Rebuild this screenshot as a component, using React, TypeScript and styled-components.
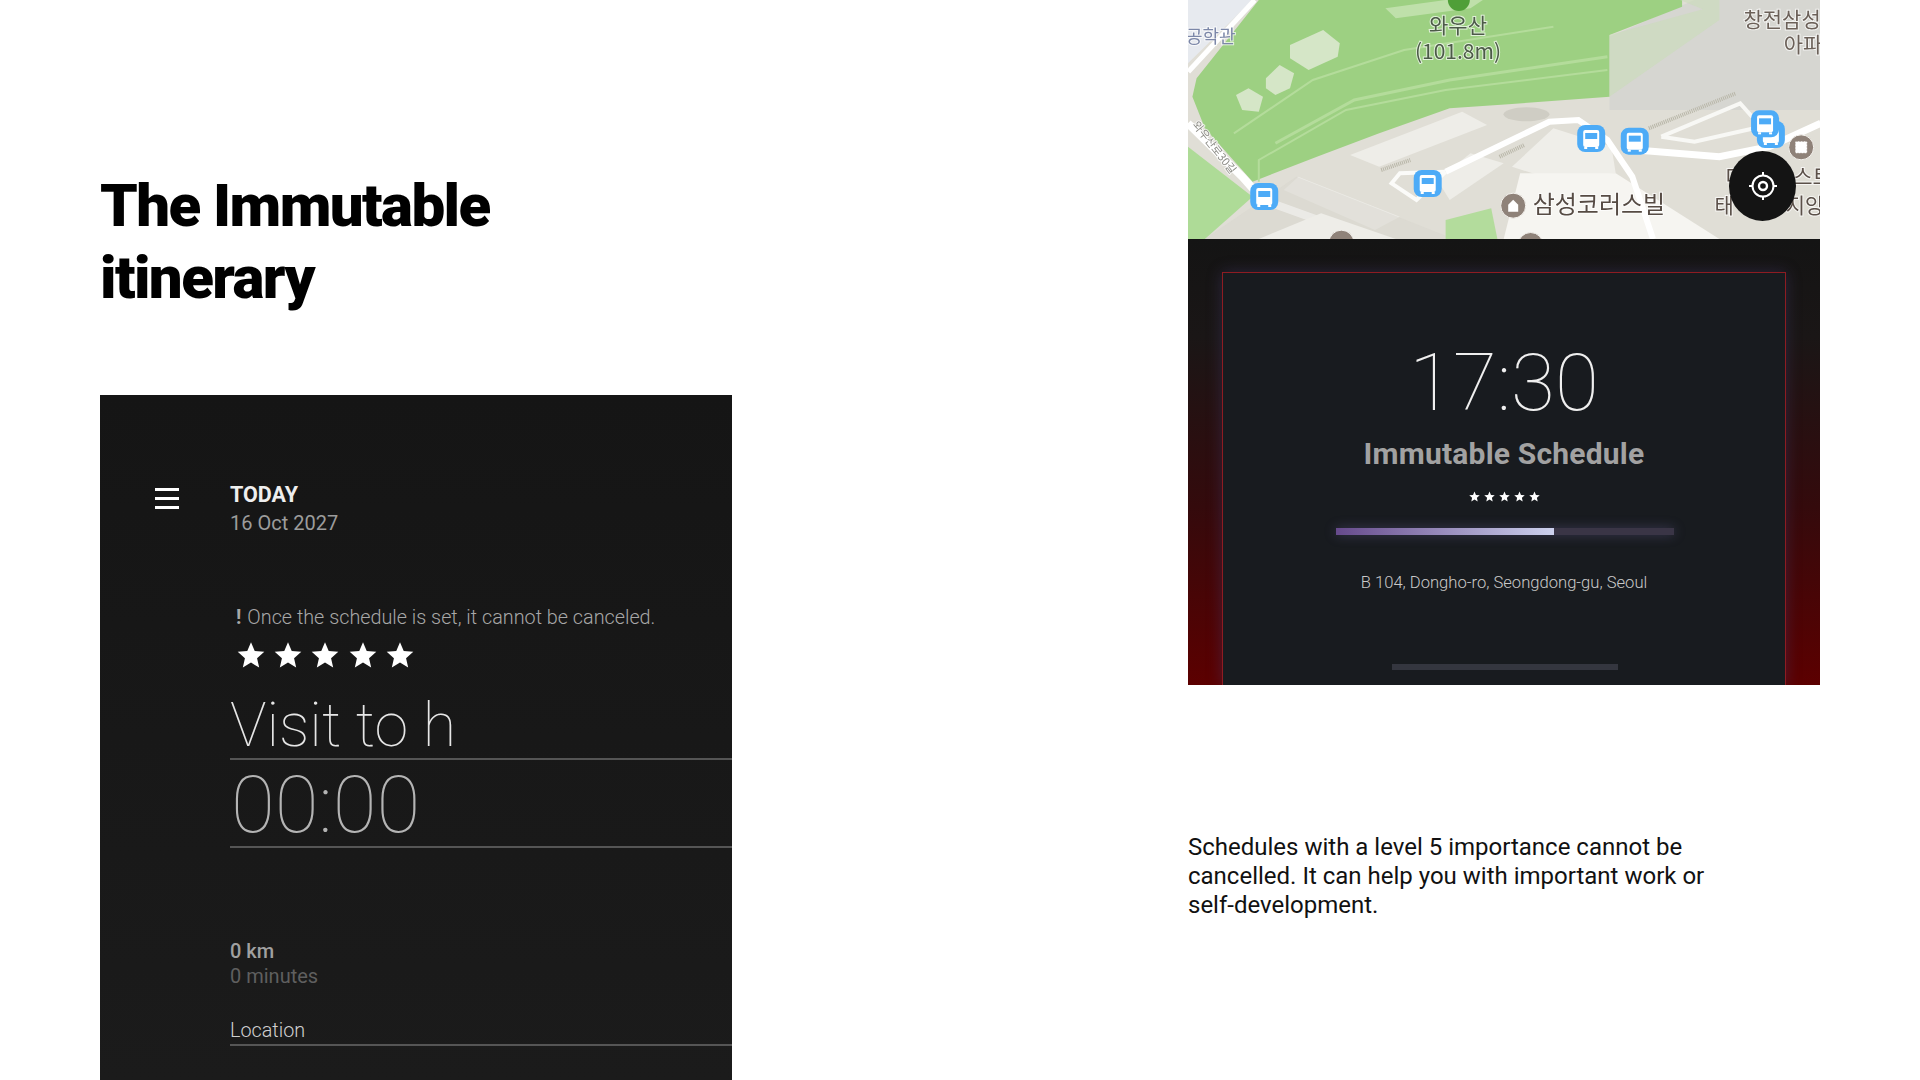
import React from "react";
import styled, { createGlobalStyle } from "styled-components";

const Global = createGlobalStyle`
  html, body { margin: 0; padding: 0; background: #fff; }
  body { font-family: Roboto, "Noto Sans CJK KR", sans-serif; }
`;

const Page = styled.main`
  width: 1920px;
  height: 1080px;
  overflow: hidden;
  display: grid;
  grid-template-columns: 632px 632px;
  column-gap: 456px;
  padding-left: 100px;
  box-sizing: border-box;
  background: #fff;
`;

const LeftColumn = styled.section`
  display: flex;
  flex-direction: column;
  padding-top: 170px;
  height: 1080px;
  box-sizing: border-box;
`;

const Title = styled.h1`
  margin: 0;
  font-size: 60px;
  line-height: 72px;
  font-weight: 900;
  letter-spacing: -1.58px;
  color: #000;
`;

const AppPanel = styled.div`
  margin-top: 81px;
  flex: 1;
  background: linear-gradient(#151515, #1b1b1b);
  padding-top: 85px;
  display: flex;
  flex-direction: column;
`;

const Header = styled.div`
  display: flex;
  align-items: flex-start;
  padding-left: 55px;
  gap: 51px;
`;

const Burger = styled.div`
  width: 24px;
  height: 21px;
  margin-top: 8px;
  display: flex;
  flex-direction: column;
  justify-content: space-between;
  & > i { display: block; height: 3px; background: #fff; }
`;

const DateBlock = styled.div`
  display: flex;
  flex-direction: column;
`;

const Today = styled.div`
  font-size: 21.5px;
  line-height: 29px;
  font-weight: 700;
  color: #eee;
`;

const DateText = styled.div`
  font-size: 20px;
  line-height: 29px;
  color: #9c9c9c;
`;

const Form = styled.div`
  margin-left: 130px;
  display: flex;
  flex-direction: column;
`;

const Notice = styled.div`
  margin: 66px 0 0 6px;
  font-size: 19.8px;
  line-height: 28px;
  font-weight: 300;
  color: #a8a8a8;
  white-space: nowrap;
  & b { font-weight: 700; margin-right: 6px; }
`;

const BigStars = styled.div`
  margin: 9px 0 0 7px;
  display: flex;
  gap: 9.2px;
  height: 28px;
`;

const SmallStars = styled.div`
  margin-top: 19px;
  display: flex;
  justify-content: center;
  gap: 4px;
  height: 11px;
`;

const NameField = styled.div`
  margin-top: 12px;
  height: 79px;
  box-sizing: border-box;
  border-bottom: 2px solid #555;
  font-size: 61px;
  line-height: 88px;
  font-weight: 100;
  color: #e6e6e6;
  white-space: nowrap;
`;

const TimeField = styled.div`
  height: 88px;
  box-sizing: border-box;
  border-bottom: 2px solid #555;
  font-size: 80px;
  line-height: 90px;
  font-weight: 100;
  color: #b4b4b4;
  padding-left: 1px;
`;

const Distance = styled.div`
  margin-top: 91px;
  font-size: 20px;
  line-height: 25px;
  font-weight: 500;
  color: #a0a0a0;
`;

const Duration = styled.div`
  font-size: 20px;
  line-height: 25px;
  color: #5f5f5f;
`;

const LocationField = styled.div`
  margin-top: 26px;
  height: 31px;
  box-sizing: border-box;
  border-bottom: 2px solid #555;
  font-size: 19.8px;
  line-height: 31px;
  font-weight: 300;
  color: #d0d0d0;
`;

const RightColumn = styled.section`
  display: flex;
  flex-direction: column;
`;

const MapWrap = styled.div`
  position: relative;
  height: 239px;
  overflow: hidden;
  & > svg { display: block; filter: blur(0.7px); }
`;

const LocateButton = styled.div`
  position: absolute;
  left: 541px;
  top: 151px;
  width: 67px;
  height: 70px;
  border-radius: 50%;
  background: #141414;
  display: flex;
  align-items: center;
  justify-content: center;
`;

const AlarmPanel = styled.div`
  height: 446px;
  overflow: hidden;
  box-sizing: border-box;
  padding: 33px 34px 0 34px;
  display: flex;
  background: linear-gradient(#141414 0%, #1a1616 22%, #340a0c 60%, #5c0000 100%);
`;

const AlarmFrame = styled.div`
  flex: 1;
  border: 1.5px solid #8e1c22;
  border-bottom: 0;
  background: #181b1f;
  box-shadow: 0 0 14px rgba(70, 60, 110, 0.45);
  display: flex;
  flex-direction: column;
`;

const ClockText = styled.div`
  margin-top: 63px;
  text-align: center;
  font-size: 80px;
  line-height: 94px;
  font-weight: 100;
  color: #efefef;
`;

const ScheduleName = styled.div`
  margin-top: 6px;
  text-align: center;
  font-size: 30px;
  line-height: 36px;
  font-weight: 700;
  letter-spacing: 0.2px;
  color: #a2a2a2;
`;

const Progress = styled.div`
  margin: 26px 0 0 113px;
  width: 338px;
  height: 7px;
  background: #3a3546;
  box-shadow: 0 0 12px rgba(130, 120, 190, 0.35);
`;

const ProgressFill = styled.div`
  height: 100%;
  background: linear-gradient(90deg, #664a8c, #cdd1ee);
`;

const Address = styled.div`
  margin-top: 36px;
  text-align: center;
  font-size: 16.6px;
  line-height: 24px;
  font-weight: 300;
  color: #c8c8c8;
`;

const HomeBar = styled.div`
  margin: 69px 0 0 169px;
  width: 226px;
  height: 6px;
  background: #34363f;
`;

const Description = styled.p`
  margin: 148px 0 0;
  width: 540px;
  font-size: 24px;
  line-height: 29px;
  font-weight: 400;
  color: #111;
`;

const StarIcon = ({ size }: { size: number }) => (
  <svg width={size} height={size} viewBox="0 0 24 24">
    <polygon fill="#fff" points="12,1 15.2,8.6 23.4,9.3 17.2,14.7 19,22.8 12,18.5 5,22.8 6.8,14.7 .6,9.3 8.8,8.6" />
  </svg>
);

// reference-crop coordinates -> map pixels
const X = (z: number) => z / 2.41 - 8;
const Y = (z: number) => z / 3;
const P = (...a: number[]) => {
  const out: string[] = [];
  for (let i = 0; i < a.length; i += 2) out.push(`${X(a[i]).toFixed(1)},${Y(a[i + 1]).toFixed(1)}`);
  return out.join(" ");
};

const Bus = ({ zx, zy }: { zx: number; zy: number }) => {
  const x = X(zx), y = Y(zy);
  return (
    <g transform={`translate(${x} ${y})`}>
      <rect x={-14} y={-14} width={28} height={27} rx={8} fill="#4dabf7" />
      <rect x={-8} y={-9} width={16} height={17} rx={2} fill="#fff" />
      <rect x={-6} y={-6} width={12} height={6} fill="#4dabf7" />
      <rect x={-7} y={8} width={3} height={2} fill="#fff" />
      <rect x={4} y={8} width={3} height={2} fill="#fff" />
    </g>
  );
};

const Poi = ({ zx, zy, kind }: { zx: number; zy: number; kind: "home" | "grid" | "blank" }) => {
  const x = X(zx), y = Y(zy);
  return (
    <g transform={`translate(${x} ${y})`}>
      <circle r={12.5} fill="#8f8279" stroke="#f4f2ee" strokeWidth={1} />
      {kind === "home" && <path d="M-5 -1 L0 -6 L5 -1 V6 H-5 Z" fill="#fff" />}
      {kind === "grid" && <rect x={-6} y={-6} width={12} height={12} rx={1} fill="#fff" stroke="#8f8279" strokeWidth={0.6} strokeDasharray="2 1" />}
    </g>
  );
};

const MapLabel = styled.text<{ $tone?: string }>`
  font-family: "Noto Sans CJK KR", Roboto, sans-serif;
  fill: ${(p) => p.$tone || "#5b5049"};
  stroke: rgba(255, 255, 255, 0.7);
  stroke-width: 2px;
  paint-order: stroke;
`;

const MapDrawing = () => (
  <svg width={632} height={239} viewBox="0 0 632 239">
    <rect width={632} height={239} fill="#e0ded6" />
    <polygon points={P(19, 0, 175, 0, 19, 190)} fill="#e7eaef" />
    <polygon points={P(19, 440, 175, 590, 60, 717, 19, 717)} fill="#aedb97" />
    <polygon points={P(1035, 110, 1240, 0, 1544, 0, 1544, 330, 1035, 330)} fill="#d6d6d1" />
    <polygon
      points={P(190, 0, 40, 235, 30, 290, 60, 385, 175, 545, 330, 470, 480, 400, 650, 325, 800, 312, 1035, 290, 1035, 105, 1210, 20, 1210, 0)}
      fill="#9dd082"
    />
    <polygon points={P(1035, 105, 1260, 28, 1205, 0, 1300, 0, 1300, 60, 1035, 290)} fill="#c9dcb9" opacity={0.6} />
    <polygon points={P(495, 25, 640, 0, 730, 0, 700, 25, 520, 55)} fill="#bfe0aa" />
    <polyline points={P(130, 400, 320, 240, 540, 150, 900, 80)} fill="none" stroke="#b4dc9b" strokeWidth={2} />
    <polyline points={P(230, 430, 420, 300, 650, 240, 1030, 170)} fill="none" stroke="#b4dc9b" strokeWidth={3} />
    <polyline points={P(190, 545, 190, 480, 400, 330, 640, 270, 1030, 210)} fill="none" stroke="#b4dc9b" strokeWidth={2} />
    <polygon points={P(265, 135, 345, 90, 385, 130, 380, 170, 310, 210, 265, 175)} fill="#d5e6c7" />
    <polygon points={P(207, 235, 240, 195, 275, 220, 265, 265, 230, 285, 207, 265)} fill="#d5e6c7" />
    <polygon points={P(135, 285, 165, 265, 200, 290, 190, 335, 150, 330)} fill="#d5e6c7" />
    <polyline points={P(180, 0, 20, 215)} fill="none" stroke="#fff" strokeWidth={5} />
    <polyline points={P(19, 370, 150, 530, 200, 600, 460, 717)} fill="none" stroke="#fff" strokeWidth={8} />
    <polygon points={P(285, 530, 530, 650, 470, 690, 250, 570)} fill="#ecebe6" />
    <polygon points={P(410, 465, 680, 335, 740, 375, 480, 500)} fill="#eeede8" />
    <polygon points={P(620, 540, 700, 460, 780, 490, 650, 600)} fill="#eeede8" />
    <polygon points={P(800, 500, 900, 385, 1040, 440, 1050, 520, 900, 540)} fill="#efeee9" />
    <polygon points={P(780, 717, 820, 520, 1050, 520, 1300, 717)} fill="#f6f5f1" />
    <polyline points={P(640, 515, 890, 365, 960, 360, 1030, 420, 1090, 530, 1140, 717)} fill="none" stroke="#fff" strokeWidth={6} />
    <polyline points={P(640, 515, 530, 520, 510, 550, 570, 600, 640, 515)} fill="none" stroke="#fbfbf9" strokeWidth={4} />
    <polyline points={P(1100, 450, 1300, 470, 1420, 440, 1544, 370)} fill="none" stroke="#fff" strokeWidth={7} />
    <polyline points={P(1160, 410, 1350, 310, 1400, 380, 1240, 425, 1160, 410)} fill="none" stroke="#f8f8f5" strokeWidth={4} />
    <polyline points={P(1130, 385, 1340, 280)} fill="none" stroke="#b8b6a8" strokeWidth={4} strokeDasharray="1 1" />
    <polyline points={P(485, 510, 555, 480)} fill="none" stroke="#b8b6a8" strokeWidth={4} strokeDasharray="1 1" />
    <polyline points={P(770, 470, 830, 435)} fill="none" stroke="#b8b6a8" strokeWidth={4} strokeDasharray="1 1" />
    <ellipse cx={X(835)} cy={Y(343)} rx={23} ry={7} fill="#cfcdc4" />
    <polygon points={P(60, 717, 280, 530, 660, 717)} fill="#d8d6cd" opacity={0.5} />
    <polygon points={P(640, 717, 640, 660, 750, 625, 765, 717)} fill="#b3dc9c" />
    <polygon points={P(190, 717, 340, 640, 520, 717)} fill="#eeede8" />
    <Bus zx={203} zy={591} />
    <Bus zx={597} zy={552} />
    <Bus zx={991} zy={417} />
    <Bus zx={1096} zy={425} />
    <Bus zx={1424} zy={405} />
    <Bus zx={1410} zy={373} />
    <Poi zx={803} zy={617} kind="home" />
    <Poi zx={1497} zy={442} kind="grid" />
    <Poi zx={389} zy={728} kind="blank" />
    <Poi zx={845} zy={735} kind="blank" />
    <circle cx={X(672)} cy={Y(0)} r={11} fill="#4f9f38" />
    <MapLabel x={X(670)} y={33} fontSize={21} textAnchor="middle" $tone="#4c5a48">와우산</MapLabel>
    <MapLabel x={X(670)} y={59} fontSize={21} textAnchor="middle" $tone="#4c5a48">(101.8m)</MapLabel>
    <MapLabel x={-2} y={43} fontSize={18} $tone="#7c87a8">공학관</MapLabel>
    <MapLabel x={X(1358)} y={27} fontSize={21} $tone="#6b6058">창전삼성</MapLabel>
    <MapLabel x={X(1455)} y={52} fontSize={21} $tone="#6b6058">아파</MapLabel>
    <MapLabel x={X(850)} y={213} fontSize={24} $tone="#564b44">삼성코러스빌</MapLabel>
    <MapLabel x={X(1315)} y={184} fontSize={21} $tone="#5b5049">대</MapLabel>
    <MapLabel x={X(1478)} y={184} fontSize={21} $tone="#5b5049">스트</MapLabel>
    <MapLabel x={X(1288)} y={213} fontSize={21} $tone="#5b5049">태</MapLabel>
    <MapLabel x={X(1460)} y={213} fontSize={21} $tone="#5b5049">지앙</MapLabel>
    <MapLabel x={4} y={125} fontSize={11} $tone="#8a8a84" transform="rotate(52 4 125)">와우산로30길</MapLabel>
  </svg>
);

const Locate = () => (
  <svg width={32} height={32} viewBox="0 0 32 32" fill="none" stroke="#fff">
    <circle cx={16} cy={16} r={10.5} strokeWidth={2} />
    <circle cx={16} cy={16} r={4} strokeWidth={2.4} />
    <path d="M16 2v4M16 26v4M2 16h4M26 16h4" strokeWidth={2} />
  </svg>
);

const stars = [0, 1, 2, 3, 4];

export default function App() {
  return (
    <>
      <Global />
      <Page>
        <LeftColumn>
          <Title>
            The Immutable
            <br />
            itinerary
          </Title>
          <AppPanel>
            <Header>
              <Burger>
                <i />
                <i />
                <i />
              </Burger>
              <DateBlock>
                <Today>TODAY</Today>
                <DateText>16 Oct 2027</DateText>
              </DateBlock>
            </Header>
            <Form>
              <Notice>
                <b>!</b>Once the schedule is set, it cannot be canceled.
              </Notice>
              <BigStars>
                {stars.map((s) => (
                  <StarIcon key={s} size={28} />
                ))}
              </BigStars>
              <NameField>Visit to h</NameField>
              <TimeField>00:00</TimeField>
              <Distance>0 km</Distance>
              <Duration>0 minutes</Duration>
              <LocationField>Location</LocationField>
            </Form>
          </AppPanel>
        </LeftColumn>
        <RightColumn>
          <MapWrap>
            <MapDrawing />
            <LocateButton>
              <Locate />
            </LocateButton>
          </MapWrap>
          <AlarmPanel>
            <AlarmFrame>
              <ClockText>17:30</ClockText>
              <ScheduleName>Immutable Schedule</ScheduleName>
              <SmallStars>
                {stars.map((s) => (
                  <StarIcon key={s} size={11} />
                ))}
              </SmallStars>
              <Progress>
                <ProgressFill style={{ width: `${(218 / 338) * 100}%` }} />
              </Progress>
              <Address>B 104, Dongho-ro, Seongdong-gu, Seoul</Address>
              <HomeBar />
            </AlarmFrame>
          </AlarmPanel>
          <Description>
            Schedules with a level 5 importance cannot be cancelled. It can help you with important work or
            self-development.
          </Description>
        </RightColumn>
      </Page>
    </>
  );
}
